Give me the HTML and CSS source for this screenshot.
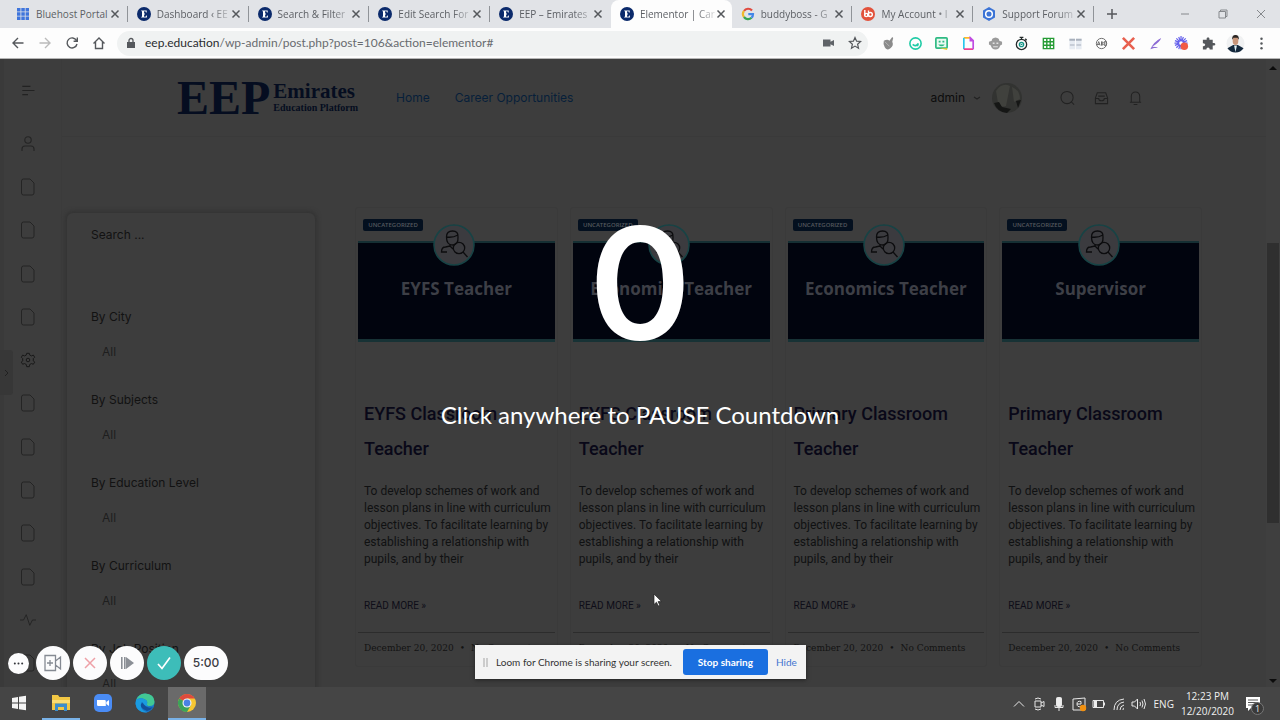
FILE: index.html
```html
<!DOCTYPE html>
<html lang="en">
<head>
<meta charset="utf-8">
<title>Elementor | Career Opportunities</title>
<link rel="stylesheet" href="styles.css">
</head>
<body>
<svg class="defs" aria-hidden="true">
  <symbol id="x" viewBox="0 0 12 12"><path d="M2.500 2.500l7 7M9.500 2.500l-7 7" fill="none" stroke="currentColor" stroke-width="1.500"/></symbol>
  <symbol id="eep" viewBox="0 0 14 14"><circle cx="7" cy="7" r="7" fill="#0b2a6b"/><path d="M4.200 3.400h5.500v2h-.7l-.6-1.200H7.100v2.200h.8v1h-.8v2.300h1.400l.8-1.300h.6v2.200H4.200v-.8h.8V4.200h-.8z" fill="#fff"/></symbol>
  <symbol id="doc" viewBox="0 0 16 18"><path d="M3.500 1h6.500l4 4v10a2 2 0 0 1-2 2H3.500a2 2 0 0 1-2-2V3a2 2 0 0 1 2-2z" fill="none" stroke="currentColor" stroke-width="1"/></symbol>
  <symbol id="person" viewBox="0 0 42 42"><circle cx="21" cy="21" r="20" fill="#3b3b3f" stroke="#174345" stroke-width="1.6"/><g fill="none" stroke="#0c0c0e" stroke-width="1.300"><path d="M13.500 13q0-6 6-6t5.500 6q.5 8-5.500 8t-6-8zM13.500 13q6 1 11.500-2M17 20v3M14 28H8.500q0-5 4-5l4.500-1 3 3"/><circle cx="26" cy="24" r="5.700"/><path d="M30 28l4.500 5"/></g></symbol>
</svg>

<header class="tabstrip">
  <nav class="tabs">
    <div class="tab"><svg viewBox="0 0 14 14"><path d="M1 1h3.500v3.500H1zM5.300 1h3.500v3.500H5.300zM9.600 1H13v3.500H9.600zM1 5.300h3.500v3.500H1zM5.300 5.300h3.500v3.500H5.300zM9.600 5.300H13v3.500H9.600zM1 9.600h3.500V13H1zM5.300 9.600h3.500V13H5.300zM9.600 9.600H13V13H9.600z" fill="#3f75dc"/></svg><span>Bluehost Portal</span><button aria-label="Close tab"><svg><use href="#x"/></svg></button></div>
    <div class="tab"><svg><use href="#eep"/></svg><span>Dashboard ‹ EE</span><button aria-label="Close tab"><svg><use href="#x"/></svg></button></div>
    <div class="tab"><svg><use href="#eep"/></svg><span>Search &amp; Filter</span><button aria-label="Close tab"><svg><use href="#x"/></svg></button></div>
    <div class="tab"><svg><use href="#eep"/></svg><span>Edit Search For</span><button aria-label="Close tab"><svg><use href="#x"/></svg></button></div>
    <div class="tab before-active"><svg><use href="#eep"/></svg><span>EEP – Emirates</span><button aria-label="Close tab"><svg><use href="#x"/></svg></button></div>
    <div class="tab active"><svg><use href="#eep"/></svg><span>Elementor | Car</span><button aria-label="Close tab"><svg><use href="#x"/></svg></button></div>
    <div class="tab"><svg viewBox="0 0 14 14" fill="none" stroke-width="2.200"><path d="M11 3.500A5 5 0 0 0 3 4" stroke="#e04a3f"/><path d="M3 4a5 5 0 0 0 0 6" stroke="#f0b92c"/><path d="M3 10a5 5 0 0 0 7.500.8" stroke="#36a554"/><path d="M10.500 10.800A5 5 0 0 0 12 7.200H7.300" stroke="#4285e8"/></svg><span>buddyboss - G</span><button aria-label="Close tab"><svg><use href="#x"/></svg></button></div>
    <div class="tab"><svg viewBox="0 0 14 14"><circle cx="7" cy="7" r="7" fill="#e2523c"/><g fill="none" stroke="#fff" stroke-width="1.400"><path d="M3.800 3v5.500"/><circle cx="5.200" cy="8" r="1.600"/><path d="M7.500 3.500v6"/><circle cx="9.300" cy="7.500" r="2"/></g></svg><span>My Account • I</span><button aria-label="Close tab"><svg><use href="#x"/></svg></button></div>
    <div class="tab"><svg viewBox="0 0 14 14"><path d="M7 0l6 3.500v7L7 14l-6-3.500v-7z" fill="#3c74d6"/><circle cx="7" cy="7" r="3.300" fill="#3c74d6" stroke="#fff" stroke-width="1.500"/></svg><span>Support Forum</span><button aria-label="Close tab"><svg><use href="#x"/></svg></button></div>
  </nav>
  <button class="newtab" aria-label="New tab"><svg viewBox="0 0 12 12"><path d="M6 1v10M1 6h10" stroke="#55585c" stroke-width="1.500"/></svg></button>
  <div class="win">
    <button aria-label="Minimize"><svg viewBox="0 0 12 12"><path d="M2 6h8"/></svg></button>
    <button aria-label="Restore"><svg viewBox="0 0 12 12"><path d="M2 3.500h6.500V10H2zM3.500 3.500V2H10v6.500H8.500"/></svg></button>
    <button aria-label="Close"><svg viewBox="0 0 12 12"><path d="M2 2l8 8M10 2l-8 8"/></svg></button>
  </div>
</header>

<div class="toolbar">
  <div class="navbtns">
    <button aria-label="Back"><svg viewBox="0 0 14 14"><path d="M12.500 7h-10M7 2L2 7l5 5"/></svg></button>
    <button aria-label="Forward" class="off"><svg viewBox="0 0 14 14"><path d="M1.500 7h10M7 2l5 5-5 5"/></svg></button>
    <button aria-label="Reload"><svg viewBox="0 0 14 14"><path d="M11.500 4.500A5 5 0 1 0 12 8M12.300 1.500v3.700H8.600"/></svg></button>
    <button aria-label="Home"><svg viewBox="0 0 14 14"><path d="M1.500 7.500L7 2l5.500 5.500M3.500 6v6.500h7V6"/></svg></button>
  </div>
  <div class="address">
    <svg class="lock" viewBox="0 0 10 12"><path d="M1 5h8v6H1z" fill="#55585c"/><path d="M3 5V3.500a2 2 0 0 1 4 0V5" fill="none" stroke="#55585c" stroke-width="1.300"/></svg>
    <div class="url"><b>eep.education</b>/wp-admin/post.php?post=106&amp;action=elementor#</div>
    <svg viewBox="0 0 14 14"><path d="M2 3.500h7.500v2.300L13 4v6L9.500 8.200v2.300H2z" fill="#5f6368"/></svg>
    <svg viewBox="0 0 14 14"><path d="M7 1.500l1.600 3.700 4 .3-3 2.700.9 4L7 10.100l-3.500 2.100.9-4-3-2.700 4-.3z" fill="none" stroke="#55585c" stroke-width="1.200"/></svg>
  </div>
  <div class="ext">
    <button aria-label="Fruit"><svg viewBox="0 0 16 16"><path d="M3 5q4-2 6 0l3-4 1 1-1 4q2 4-2 7t-6-1-1-7z" fill="#8b8b8b"/><path d="M4 6l5 5" stroke="#b5b5b5"/></svg></button>
    <button aria-label="Grammar"><svg viewBox="0 0 16 16" fill="none" stroke="#20cba6" stroke-width="1.700"><circle cx="8" cy="8" r="6"/><path d="M5 9q3 3 6-1l-1 3"/></svg></button>
    <button aria-label="Smiley"><svg viewBox="0 0 16 16"><rect x="2" y="2" width="12" height="11" rx="1" fill="#eafaf2" stroke="#2fba83" stroke-width="1.800"/><path d="M4.500 9h7q-3.500 4-7 0zM5 5h2v2H5zM9 5h2v2H9z" fill="#2fba83"/><path d="M6 13h8v2z" fill="#f1c928"/></svg></button>
    <button aria-label="Page"><svg viewBox="0 0 16 16" fill="none" stroke-width="1.800"><path d="M3 2h7" stroke="#ffb61f"/><path d="M3 2v12" stroke="#27c7ed"/><path d="M3 14h10" stroke="#ed398e"/><path d="M13 14V5l-3-3v3h3" stroke="#c04ce2"/></svg></button>
    <button aria-label="Ape"><svg viewBox="0 0 16 16"><path d="M1 6l3-1q0-3 4-3.500Q12 2 12 5l3 1v3l-2 1q-1 4-5 4.500Q4 14 3 10L1 9z" fill="#9b9b9b"/><path d="M5 7h2v1.500H5zM9 7h2v1.500H9zM5.500 11h5v1h-5z" fill="#e2e2e2"/></svg></button>
    <button aria-label="Timer"><svg viewBox="0 0 16 16" fill="none" stroke="#242b2b" stroke-width="1.400"><circle cx="8" cy="9" r="5.500"/><path d="M6 1.500h4M8 1.500v2M12 3l1.500 1.500"/><circle cx="8" cy="9" r="2.300" stroke="#159687"/><path d="M7 9h2" stroke="#159687"/></svg></button>
    <button aria-label="Sheet"><svg viewBox="0 0 16 16" fill="none" stroke="#259c34" stroke-width="1.500"><path d="M2.500 2.500h11v11h-11zM2.500 6.200h11M2.500 9.800h11M6.200 2.500v11M9.800 2.500v11"/></svg></button>
    <button aria-label="Columns"><svg viewBox="0 0 16 16"><path d="M1.500 3h6v11h-6zM8.500 3h6v11h-6z" fill="#e6ebf2"/><path d="M1.500 3h6v2h-6zM8.500 3h6v2h-6zM2 9h5v1H2zM9 9h5v1H9z" fill="#a8b0bc"/></svg></button>
    <button aria-label="Ad filter"><svg viewBox="0 0 16 16" fill="none" stroke="#666" stroke-width="1"><circle cx="8" cy="8" r="5.500"/><path d="M3.500 10l1.500-4 1.500 4M4 9h2M8 6v4l2-1-2-1 2-1-2-1M11 6v4h2V6z"/></svg></button>
    <button aria-label="Cross"><svg viewBox="0 0 16 16"><path d="M2 2l12 12M14 2L2 14" stroke="#e8604f" stroke-width="2.800"/></svg></button>
    <button aria-label="Feather"><svg viewBox="0 0 16 16"><path d="M2.500 14Q6 6 14 2q-1 4-9.500 9.500 5 0 6 1-4 0-8 1.500z" fill="#8c6bd4"/></svg></button>
    <button aria-label="Recorder"><svg viewBox="0 0 16 16"><path d="M7.500 0v14M.5 7.500h14M2.500 2.500l9 9M12.500 2.500l-10 10M5 1l5 12M1 10l13-5M1 5l13 5M10 1L5 14" stroke="#6561ec" stroke-width="1.300"/><circle cx="7.500" cy="7.500" r="2" fill="#fff"/><circle cx="11" cy="11" r="4" fill="#f15a45"/></svg></button>
    <button aria-label="Extensions"><svg viewBox="0 0 16 16"><path d="M2 4h4q-.5-2.700 1.500-2.700T9 4h3.500v3.500q2.800-.5 2.800 1.300T12.500 10v4.500H9.300q0-2.300-1.800-2.300t-1.800 2.300H2v-3.700q2.500.2 2.500-1.500T2 7.700z" fill="#55585c"/></svg></button>
    <button aria-label="Profile"><svg viewBox="0 0 20 20"><circle cx="10" cy="10" r="9.500" fill="#f0f1f2"/><path d="M1.500 15l6-3.500h5l6 3.500q-3 4.500-8.500 4.500T1.500 15z" fill="#14283c"/><path d="M8.500 12h3L10 19z" fill="#dff1f6"/><ellipse cx="10" cy="7" rx="3" ry="4.500" fill="#c8967a"/><path d="M6.500 6q-.5-5 3.500-5t3.500 5L12 4H8z" fill="#2a2422"/></svg></button>
    <button aria-label="Menu"><svg viewBox="0 0 16 16" fill="#55585c"><circle cx="8" cy="3" r="1.300"/><circle cx="8" cy="8" r="1.300"/><circle cx="8" cy="13" r="1.300"/></svg></button>
  </div>
</div>

<div class="viewport">
  <aside class="rail">
    <button class="burger" aria-label="Menu"><svg viewBox="0 0 16 16"><path d="M1 3h10M1 8h15M1 13h7" stroke="currentColor" stroke-width="1.500"/></svg></button>
    <nav class="railnav">
      <a href="#" aria-label="Profile"><svg viewBox="0 0 16 18"><circle cx="8" cy="5" r="3.200"/><path d="M2 16v-2q0-3 3-3h6q3 0 3 3v2"/></svg></a>
      <a href="#" aria-label="Page"><svg><use href="#doc"/></svg></a>
      <a href="#" aria-label="Page"><svg><use href="#doc"/></svg></a>
      <a href="#" aria-label="Page"><svg><use href="#doc"/></svg></a>
      <a href="#" aria-label="Page"><svg><use href="#doc"/></svg></a>
      <a href="#" aria-label="Settings" class="dark"><svg viewBox="0 0 18 18"><path d="M7.500 1.500h3l.5 2 2 .9 2-1 1.500 2.500-1.500 1.500v2.500l1.500 1.500-1.500 2.400-2-.8-2 1-.5 2.500h-3l-.5-2.500-2-1-2 .8-1.500-2.400L3 9.900V7.400L1.500 5.900 3 3.400l2 1 2-.9z"/><circle cx="9" cy="9" r="2"/></svg></a>
      <a href="#" aria-label="Page"><svg><use href="#doc"/></svg></a>
      <a href="#" aria-label="Page"><svg><use href="#doc"/></svg></a>
      <a href="#" aria-label="Page"><svg><use href="#doc"/></svg></a>
      <a href="#" aria-label="Page"><svg><use href="#doc"/></svg></a>
      <a href="#" aria-label="Page"><svg><use href="#doc"/></svg></a>
      <a href="#" aria-label="Activity"><svg viewBox="0 0 18 18"><path d="M0 9h4l3-6 4 12 3-6h4"/></svg></a>
      <a href="#" aria-label="Page"><svg><use href="#doc"/></svg></a>
    </nav>
  </aside>

  <div class="site">
    <header class="sitehead">
      <a class="logo" href="#"><span class="mark">EEP</span><span class="words"><span class="big">Emirates</span><span class="small">Education Platform</span></span></a>
      <nav class="menu"><a href="#">Home</a><a href="#">Career Opportunities</a></nav>
      <div class="account">
        <span>admin</span>
        <svg class="caret" viewBox="0 0 8 8"><path d="M1 3l3 2 3-2"/></svg>
        <svg class="avatar" viewBox="0 0 30 30"><circle cx="15" cy="15" r="15" fill="#323331"/><path d="M4 8Q10-1 18 3l-4 20q-6 2-8-3zM20 4q8 3 8 12l-6 3z" fill="#40413d"/><path d="M2 20l5-1 3 5 9 2-4 4Q5 29 2 20zM24 18l5-1-3 8z" fill="#151615"/></svg>
        <svg class="ico" viewBox="0 0 16 16"><circle cx="7.500" cy="7.500" r="6.500"/><path d="M12 12l3 3"/></svg>
        <svg class="ico" viewBox="0 0 16 16"><path d="M1.500 8l2-5.500h9l2 5.500v6h-13zM1.500 8.500H5q0 2.500 3 2.500t3-2.500h3.500M4.500 6h7"/></svg>
        <svg class="ico" viewBox="0 0 16 16"><path d="M3.500 12.500V6a4.500 4.500 0 0 1 9 0v6.500M2 12.500h12M6 15h4"/></svg>
      </div>
    </header>

    <main class="content">
      <form class="filters">
        <input class="search" type="text" placeholder="Search ..." aria-label="Search">
        <div class="field"><label for="f1">By City</label><select id="f1"><option>All</option></select></div>
        <div class="field"><label for="f2">By Subjects</label><select id="f2"><option>All</option></select></div>
        <div class="field"><label for="f3">By Education Level</label><select id="f3"><option>All</option></select></div>
        <div class="field"><label for="f4">By Curriculum</label><select id="f4"><option>All</option></select></div>
        <div class="field"><label for="f5">By Job Position</label><select id="f5"><option>All</option></select></div>
      </form>
      <div class="cards">
        <article class="card">
          <div class="tagrow"><span class="tag">UNCATEGORIZED</span></div>
          <div class="banner"><svg class="badge"><use href="#person"/></svg><span>EYFS Teacher</span></div>
          <div class="body"><h3>EYFS Classroom Teacher</h3><p>To develop schemes of work and lesson plans in line with curriculum objectives. To facilitate learning by establishing a relationship with pupils, and by their</p><a href="#">READ MORE »</a></div>
          <footer><span>December 20, 2020</span><span>•</span><span>No Comments</span></footer>
        </article>
        <article class="card">
          <div class="tagrow"><span class="tag">UNCATEGORIZED</span></div>
          <div class="banner"><svg class="badge"><use href="#person"/></svg><span>Economics Teacher</span></div>
          <div class="body"><h3>EYFS Classroom Teacher</h3><p>To develop schemes of work and lesson plans in line with curriculum objectives. To facilitate learning by establishing a relationship with pupils, and by their</p><a href="#">READ MORE »</a></div>
          <footer><span>December 20, 2020</span><span>•</span><span>No Comments</span></footer>
        </article>
        <article class="card">
          <div class="tagrow"><span class="tag">UNCATEGORIZED</span></div>
          <div class="banner"><svg class="badge"><use href="#person"/></svg><span>Economics Teacher</span></div>
          <div class="body"><h3>Primary Classroom Teacher</h3><p>To develop schemes of work and lesson plans in line with curriculum objectives. To facilitate learning by establishing a relationship with pupils, and by their</p><a href="#">READ MORE »</a></div>
          <footer><span>December 20, 2020</span><span>•</span><span>No Comments</span></footer>
        </article>
        <article class="card">
          <div class="tagrow"><span class="tag">UNCATEGORIZED</span></div>
          <div class="banner"><svg class="badge"><use href="#person"/></svg><span>Supervisor</span></div>
          <div class="body"><h3>Primary Classroom Teacher</h3><p>To develop schemes of work and lesson plans in line with curriculum objectives. To facilitate learning by establishing a relationship with pupils, and by their</p><a href="#">READ MORE »</a></div>
          <footer><span>December 20, 2020</span><span>•</span><span>No Comments</span></footer>
        </article>
      </div>
    </main>
  </div>

  <div class="scrollbar"><svg viewBox="0 0 8 5"><path d="M0 5l4-4 4 4z"/></svg><i></i><svg viewBox="0 0 8 5"><path d="M0 0l4 4 4-4z"/></svg></div>

  <button class="handle" aria-label="Show panel"><svg viewBox="0 0 6 8"><path d="M1 1l3 3-3 3" fill="none" stroke="#202020"/></svg></button>

  <button class="countdown"><span class="num">0</span><span class="hint">Click anywhere to PAUSE Countdown</span></button>

  <div class="loom">
    <button class="mini" aria-label="More"><svg viewBox="0 0 12 12" fill="#33353b"><circle cx="2" cy="6" r="1.100"/><circle cx="6" cy="6" r="1.100"/><circle cx="10" cy="6" r="1.100"/></svg></button>
    <button aria-label="Camera"><svg viewBox="0 0 18 18" fill="none" stroke="#858a93" stroke-width="1.300"><path d="M1 1.500h10.500v15H1zM6 6v6M3 9h6M11.500 7l5-4v12l-5-4"/></svg></button>
    <button aria-label="Cancel"><svg viewBox="0 0 18 18"><path d="M4 4l10 10M14 4L4 14" stroke="#eea0a7" stroke-width="1.500"/></svg></button>
    <button aria-label="Resume"><svg viewBox="0 0 18 18"><path d="M3 3h1.600v12H3zM6 3h1.600v12H6zM8 3l8 6-8 6z" fill="#8b8f96"/></svg></button>
    <button class="done" aria-label="Finish"><svg viewBox="0 0 18 18"><path d="M3 10l4 4.500L15 3.500" fill="none" stroke="#fff" stroke-width="1.700"/></svg></button>
    <span class="time">5:00</span>
  </div>

  <div class="share">
    <span class="grip"></span>
    <span class="msg">Loom for Chrome is sharing your screen.</span>
    <button class="stop">Stop sharing</button>
    <a href="#">Hide</a>
  </div>

  <svg class="cursor" viewBox="0 0 10 14"><path d="M1 1v10.500l2.500-2.300 1.800 3.800 1.500-.7-1.700-3.700H8.500z" fill="#fff" stroke="#222" stroke-width=".7"/></svg>
</div>

<footer class="taskbar">
  <div class="apps">
    <button aria-label="Start"><svg viewBox="0 0 20 20"><path d="M3 5l6-1v5.500H3zM10 3.800l7-1v6.700h-7zM3 10.500h6V16l-6-1zM10 10.500h7v6.700l-7-1z" fill="#f4f4f4"/></svg></button>
    <button class="open" aria-label="Files"><svg viewBox="0 0 20 20"><path d="M1 2h6l1.500 2H19v13H1z" fill="#f2c744"/><path d="M1 7h18v3H1z" fill="#fbdc72"/><path d="M4 10.500h12V18h-3v-4H7v4H4z" fill="#3c8dcc"/></svg></button>
    <button aria-label="Zoom"><svg viewBox="0 0 20 20"><rect x="1" y="1" width="18" height="18" rx="5" fill="#4a8cf5"/><path d="M4 7h7.500q1.300 0 1.300 1.300V13H5.300Q4 13 4 11.700zM13.300 9L16 7v6l-2.700-2z" fill="#fff"/></svg></button>
    <button aria-label="Edge"><svg viewBox="0 0 20 20"><circle cx="10" cy="10" r="9.500" fill="#1877c9"/><path d="M1 7Q4 0 10.500.5 19 1 19.500 8.500q0 4.500-5 4.500-3 0-2.500-2 1-3-2-4.500Q5 4 1 7z" fill="#42c894"/><path d="M1 7q4-3 9-.5 3 1.500 2 4.500-.5 2 2.500 2-5 1-6-3-6 6 4 9.400Q2 20 .5 11z" fill="#1a9be0"/><path d="M7 9q-4 6 5 9 4-1 6-4-4 1.500-7-.5T7 9z" fill="#124f9a"/></svg></button>
    <button class="open current" aria-label="Chrome"><svg viewBox="0 0 20 20"><circle cx="10" cy="10" r="9" fill="#f6c632"/><path d="M10 10L2.200 5.500A9 9 0 0 1 17.800 5.500H10z" fill="#df4a3d"/><path d="M2.200 5.500A9 9 0 0 0 10 19l4-7-4-2z" fill="#3ca35a"/><circle cx="10" cy="10" r="4.500" fill="#f7f7f7"/><circle cx="10" cy="10" r="3.400" fill="#4a82e4"/></svg></button>
  </div>
  <div class="tray">
    <svg viewBox="0 0 16 16"><path d="M3 10.500l5-5 5 5"/></svg>
    <svg viewBox="0 0 16 16"><path d="M4 5h6v6H4zM10 7l3-1.500v5L10 9M4 3q3-2 6 0M4 13q3 2 6 0"/></svg>
    <svg viewBox="0 0 16 16"><rect x="5.500" y="1.500" width="5" height="9" fill="#eee" rx="1"/><path d="M4 9v2.500h8V9M8 12v3"/></svg>
    <svg viewBox="0 0 16 16"><path d="M2 3l12-1v12H2zM10 5.500q-4-1-4 2.500t4 2.500M6 8h4V5.500"/><circle cx="12" cy="12" r="3.200" fill="#f29111" stroke="none"/></svg>
    <svg viewBox="0 0 16 16"><path d="M2 4.500h10.500v7H2zM13.500 6.500v3"/><path d="M3 5h3v6H3z" fill="#eee" stroke="none"/></svg>
    <svg viewBox="0 0 16 16"><path d="M3 14Q3 4 13 3M6 14q0-7 7-8M9 14q0-4 4-5M12 14q0-2 1-2"/></svg>
    <svg viewBox="0 0 16 16"><path d="M1 6h2.500l3-3v10l-3-3H1zM9 6q1 2 0 4M11 4.500q2 3.500 0 7M13 3q3 5 0 10"/></svg>
    <span class="lang">ENG</span>
    <time class="clock"><span>12:23 PM</span><span>12/20/2020</span></time>
    <button class="notes" aria-label="Notifications"><svg viewBox="0 0 16 16"><path d="M1 1h14v11H6l-3 3v-3H1z" fill="#fff"/><path d="M3 4h10M3 6.500h10M3 9h7" stroke="#555"/></svg><span>1</span></button>
  </div>
</footer>
</body>
</html>
```
FILE: styles.css
```css
* { box-sizing: border-box; }
html, body { height: 100%; }
body { margin: 0; display: flex; flex-direction: column; overflow: hidden; font-family: "Open Sans", "Noto Sans", sans-serif; font-size: 12px; background: #3d3d3d; }
button { border: 0; padding: 0; margin: 0; background: none; font: inherit; color: inherit; display: flex; align-items: center; justify-content: center; }
a { text-decoration: none; color: inherit; }
svg { display: block; flex: none; }
.defs { position: absolute; width: 0; height: 0; }

/* browser tabs */
.tabstrip { flex: none; height: 28px; display: flex; align-items: center; background: #e1e3e7; padding-left: 7px; }
.tabs { display: flex; width: 1087px; height: 28px; }
.tab { flex: 1; min-width: 0; display: flex; align-items: center; padding: 0 7px 0 9px; position: relative; color: #5c5f64; font: 10px/16px "Open Sans", sans-serif; }
.tab::after { content: ""; position: absolute; right: 0; top: 6px; height: 16px; width: 1px; background: #909398; }
.tab.active { background: #fdfdfd; border-radius: 8px 8px 0 0; }
.tab.active::after, .tab.before-active::after { display: none; }
.tab > svg { width: 14px; height: 14px; margin-right: 6px; }
.tab span { flex: 1; white-space: nowrap; -webkit-mask-image: linear-gradient(90deg, #000 75%, transparent 105%); mask-image: linear-gradient(90deg, #000 75%, transparent 105%); }
.tab:first-child span { -webkit-mask-image: none; mask-image: none; }
.tab button { color: #55585c; }
.tab button svg { width: 12px; height: 12px; }
.newtab { width: 36px; height: 28px; }
.newtab svg { width: 12px; height: 12px; }
.win { display: flex; margin-left: auto; }
.win button { width: 38px; height: 24px; }
.win svg { width: 12px; height: 12px; fill: none; stroke: #85888c; }

/* browser toolbar */
.toolbar { flex: none; height: 31px; display: flex; align-items: center; background: #fdfdfd; padding: 0 5px 0 4px; border-bottom: 1px solid #b5b5b5; }
.navbtns { display: flex; }
.navbtns button { width: 27px; height: 27px; }
.navbtns svg { width: 14px; height: 14px; fill: none; stroke: #55585c; stroke-width: 1.4; }
.navbtns .off svg { stroke: #bbb; }
.address { flex: 1; height: 25px; margin: 0 7px 0 5px; padding: 0 6px 0 9px; display: flex; align-items: center; gap: 13px; background: #f0f2f2; border-radius: 13px; }
.address svg { width: 14px; height: 14px; }
.address .lock { width: 10px; height: 12px; margin-right: -4px; }
.url { flex: 1; color: #686b6f; font: 12px/18px Lato, sans-serif; white-space: nowrap; }
.url b { font-weight: 400; color: #2a2c2f; }
.ext { display: flex; width: 400px; }
.ext button { flex: 1; height: 26px; }
.ext svg { width: 15px; height: 15px; }
.ext button:nth-child(14) svg { width: 19px; height: 19px; }

/* dimmed page */
.viewport { flex: 1; min-height: 0; position: relative; display: flex; overflow: hidden; background: #3d3d3d; color: #121212; font-family: Inter, "Liberation Sans", sans-serif; }
.rail { flex: none; width: 62px; display: flex; flex-direction: column; border-left: 4px solid #3a3a3a; border-right: 1px solid #3b3b3b; color: #242424; padding-right: 9px; }
.burger { height: 63px; color: #222; }
.burger svg { width: 16px; height: 13px; }
.railnav { flex: 1; display: grid; grid-auto-rows: 1fr; padding-bottom: 2px; }
.railnav a { display: flex; align-items: center; justify-content: center; }
.railnav svg { width: 16px; height: 18px; fill: none; stroke: currentColor; stroke-width: 1.1; }
.railnav .dark { color: #181818; }
.site { flex: 1; min-width: 0; }
.sitehead { height: 78px; display: flex; align-items: center; padding: 0 123px 0 115px; border-bottom: 1px solid #3a3a3a; }
.logo { display: flex; align-items: center; gap: 3px; color: #050d20; font-family: "Liberation Serif", serif; font-weight: 700; }
.mark { font-size: 48px; line-height: 48px; }
.words { display: flex; flex-direction: column; }
.big { font-size: 21px; line-height: 20px; }
.small { font-size: 10px; line-height: 14px; }
.menu { display: flex; gap: 25px; margin-left: 38px; color: #071f3a; font-size: 12px; }
.account { margin-left: auto; display: flex; align-items: center; font-size: 12px; color: #0c0c0c; }
.account svg { fill: none; stroke: #222; stroke-width: 1.1; }
.account .caret { width: 8px; height: 8px; margin: 0 11px 0 8px; }
.account .avatar { width: 30px; height: 30px; margin-right: 38px; stroke: none; }
.account .ico { width: 15px; height: 16px; margin-right: 19px; }
.account .ico:last-child { margin-right: 0; }
.content { display: flex; align-items: flex-start; padding: 70px 64px 0 5px; gap: 40px; }
.filters { width: 248px; flex: none; margin-top: 6px; height: 500px; padding: 8px 24px; border-radius: 6px; box-shadow: 0 0 4px 2px #333; font-size: 12px; }
.search { display: block; width: 100%; height: 26px; padding: 0; border: 0; background: none; font: inherit; color: #121212; margin-bottom: 57px; }
.search::placeholder { color: #121212; opacity: 1; }
.field { height: 83px; }
.field label { display: block; line-height: 26px; }
.field select { display: block; appearance: none; border: 0; background: none; width: 160px; height: 26px; padding: 0 0 0 11px; margin-top: 8px; font: inherit; color: #1e1e1e; opacity: 1; }
.cards { flex: 1; display: grid; grid-template-columns: repeat(4, 1fr); gap: 12px; }
.card { min-width: 0; border: 1px solid #3a3a3a; border-radius: 3px; height: 460px; padding: 0 2px; }
.tagrow { height: 33px; padding: 11px 5px 0; }
.tag { display: block; width: 60px; height: 12px; border-radius: 2px; background: #04101f; color: #55595e; font: 600 6px/12px "Open Sans", sans-serif; text-align: center; }
.banner { position: relative; height: 101px; background: #01040e; border-top: 2px solid #152f33; border-bottom: 3px solid #173235; padding-bottom: 4px; display: flex; align-items: center; justify-content: center; font: 700 17px/24px "Open Sans", sans-serif; color: #3d3f46; }
.badge { position: absolute; left: 50%; top: -19px; width: 42px; height: 42px; margin-left: -23px; }
.body { padding: 54px 0 0 6px; font-family: Roboto, sans-serif; }
.body h3 { margin: 0; font-size: 18px; line-height: 35px; font-weight: 500; color: #090818; }
.body p { margin: 17px 0 0; font-size: 12px; line-height: 17px; color: #101112; }
.body a { display: block; margin-top: 29px; font-size: 10px; line-height: 18px; color: #0e0d18; }
.card footer { display: flex; gap: 6px; margin-top: 17px; padding: 8px 6px 0; border-top: 1px solid #2c2c2c; font: 9px/14px "DejaVu Serif", serif; color: #131313; white-space: nowrap; }
.scrollbar { flex: none; width: 14px; display: flex; flex-direction: column; justify-content: space-between; align-items: center; padding: 6px 0 3px; background: #3f3f3f; }
.scrollbar svg { width: 8px; height: 5px; fill: #0c0c0c; }
.scrollbar i { width: 12px; height: 280px; background: #2f2f2f; margin-bottom: -16px; }
.handle { position: absolute; left: 0; top: 291px; width: 13px; height: 45px; background: #373737; border-radius: 0 3px 3px 0; }
.handle svg { width: 6px; height: 8px; }

/* floating recorder controls */
.countdown { position: absolute; inset: 0; flex-direction: column; justify-content: flex-start; padding-top: 144px; color: #fff; }
.num { font: 600 155px/160px Inter, sans-serif; }
.hint { margin-top: 37px; font: 24px/30px Lato, sans-serif; }
.loom { position: absolute; left: 8px; bottom: 7px; display: flex; align-items: center; gap: 3px; }
.loom button { width: 34px; height: 34px; border-radius: 50%; background: #fcfcfd; }
.loom button svg { width: 18px; height: 18px; }
.loom .mini { width: 21px; height: 21px; margin-right: 4px; }
.loom .mini svg { width: 11px; height: 11px; }
.loom .done { background: #3dbdb9; }
.time { width: 44px; height: 34px; border-radius: 17px; background: #fcfcfd; color: #3a3b42; font: 500 12px/34px Inter, sans-serif; text-align: center; }
.share { position: absolute; left: 475px; bottom: 8px; height: 34px; display: flex; align-items: center; padding: 0 9px 0 8px; background: #f3f3f3; box-shadow: 0 1px 4px #222; font: 10px/14px Lato, sans-serif; color: #333; white-space: nowrap; }
.grip { width: 5px; height: 9px; border-left: 2px solid #ccc; border-right: 2px solid #ccc; margin-right: 8px; }
.stop { width: 85px; height: 26px; margin: 0 8px 0 11px; background: #1a6fe0; color: #fff; border-radius: 3px; font-weight: 700; }
.share a { color: #3f74d0; }
.cursor { position: absolute; left: 653px; top: 534px; width: 10px; height: 14px; }

/* desktop taskbar */
.taskbar { flex: none; height: 33px; display: flex; justify-content: space-between; background: #454545; color: #f0f0f0; }
.apps { display: flex; gap: 4px; }
.apps button { width: 38px; border-bottom: 2px solid transparent; }
.apps .open { border-bottom-color: #79b2e8; }
.apps .current { background: #6a6a6a; }
.apps svg { width: 20px; height: 20px; }
.tray { display: flex; align-items: center; gap: 4px; padding-right: 19px; }
.tray > svg { width: 16px; height: 16px; fill: none; stroke: #e8e8e8; }
.lang { margin: 0 3px; font-size: 10px; }
.clock { display: flex; flex-direction: column; align-items: center; font-size: 10px; line-height: 15px; }
.notes { position: relative; width: 16px; height: 16px; margin-left: 7px; }
.notes svg { width: 16px; height: 16px; }
.notes span { position: absolute; left: 6px; top: 6px; width: 13px; height: 13px; border-radius: 50%; background: #3a3a3a; border: 1px solid #777; font-size: 9px; line-height: 11px; text-align: center; }
```
